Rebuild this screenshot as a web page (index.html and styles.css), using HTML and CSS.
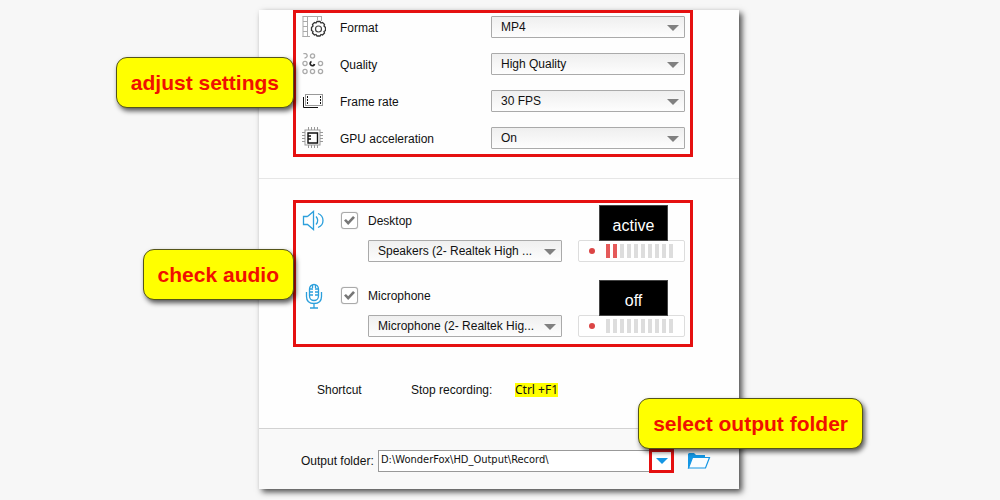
FILE: index.html
```html
<!DOCTYPE html>
<html lang="en">
<head>
    <meta charset="UTF-8">
    <meta name="viewport" content="width=device-width, initial-scale=1.0">
    <title>Recorder settings</title>
    <link rel="stylesheet" href="styles.css">
</head>
<body>
    <main class="panel">
        <section class="settings">
            <div class="marked settings-grid">
                <svg class="icon" width="24" height="22" viewBox="0 0 24 22" fill="none">
                    <path d="M1 0.500V21M5.500 0.500V21M0.500 0.500H20M19.500 0V5M15.500 0V4M1 5.500H5M1 10.500H5M1 15.500H5M0.500 20.500H8" stroke="#aaa"/>
                    <path d="M14 7l1-1.500h3L19 7l1.500-.500 2 2-.500 1.500 1.500 1.500v3L22 15.500l.500 1.500-2 2-1.500-.500-1 1.500h-3l-1-1.500-1.500.500-2-2 .500-1.500-1.500-1v-3l1.500-1.500-.500-1.500 2-2z" stroke="#333" stroke-width="1.300"/>
                    <circle cx="16.500" cy="13" r="3" stroke="#444" stroke-width="1.200"/>
                </svg>
                <label for="format">Format</label>
                <div class="select">
                    <select id="format"><option>MP4</option><option>AVI</option></select>
                </div>

                <svg class="icon" width="24" height="22" viewBox="0 0 24 22" fill="none" stroke="#aaa" stroke-width="1.300">
                    <path d="M1.500 1a2.200 2.200 0 1 1 1 3.800"/>
                    <circle cx="10.500" cy="3" r="2.100"/>
                    <circle cx="3" cy="10.500" r="2.100"/>
                    <circle cx="18.500" cy="10.500" r="2.100"/>
                    <circle cx="3" cy="18.500" r="2.100"/>
                    <circle cx="10.500" cy="18.500" r="2.100"/>
                    <circle cx="18.500" cy="18.500" r="2.100"/>
                    <path d="M9.500 8.500a2.200 2.200 0 1 0 3 2.500" stroke="#222" stroke-width="1.700"/>
                </svg>
                <label for="quality">Quality</label>
                <div class="select">
                    <select id="quality"><option>High Quality</option><option>Standard</option></select>
                </div>

                <svg class="icon" width="24" height="22" viewBox="0 0 24 22" fill="none">
                    <rect x="3.500" y="4.500" width="17" height="11" stroke="#999"/>
                    <path d="M5.500 6v9M18.500 6v9" stroke="#111" stroke-dasharray="2 1"/>
                    <path d="M1.500 7v10.500H16" stroke="#111"/>
                </svg>
                <label for="rate">Frame rate</label>
                <div class="select">
                    <select id="rate"><option>30 FPS</option><option>60 FPS</option></select>
                </div>

                <svg class="icon" width="24" height="22" viewBox="0 0 24 22" fill="none">
                    <path d="M6.500 0v3M9.500 0v3M12.500 0v3M15.500 0v3M6.500 18v3M9.500 18v3M12.500 18v3M15.500 18v3M0 5.500h3M0 8.500h3M0 11.500h3M0 14.500h3M18 5.500h3M18 8.500h3M18 11.500h3M18 14.500h3" stroke="#999"/>
                    <rect x="3" y="3" width="15" height="15" stroke="#999"/>
                    <path d="M6 6h9.500v10H6zM6 9h3M6 12h3" stroke="#111" stroke-width="1.400"/>
                </svg>
                <label for="gpu">GPU acceleration</label>
                <div class="select">
                    <select id="gpu"><option>On</option><option>Off</option></select>
                </div>
                <div class="callout callout-settings">adjust settings</div>
            </div>
        </section>

        <section class="audio">
            <div class="marked audio-list">
                <div class="source">
                    <svg class="icon" width="24" height="22" viewBox="0 0 24 22" fill="none" stroke="#2b9fdc" stroke-width="1.300">
                        <path d="M5.500 6.500H1.500v8h4l6 5V1.500l-6 5"/>
                        <path d="M14 6.500q3.500 4 0 8M16 3.500q5 2 5 7t-5 7"/>
                    </svg>
                    <input class="check" type="checkbox" id="desktop" checked>
                    <label for="desktop">Desktop</label>
                    <div class="status">active</div>
                    <div class="select device">
                        <select aria-label="Desktop device"><option>Speakers (2- Realtek High ...</option></select>
                    </div>
                    <div class="level">
                        <span class="dot"></span>
                        <div class="bars"><i class="on"></i><i class="on"></i><i></i><i></i><i></i><i></i><i></i><i></i><i></i><i></i></div>
                    </div>
                </div>
                <div class="source">
                    <svg class="icon" width="24" height="26" viewBox="0 0 24 26" fill="none" stroke="#2b9fdc" stroke-width="1.300">
                        <rect x="7.500" y="1.500" width="9" height="16" rx="4.500"/>
                        <path d="M4.500 9v4.500q0 7 7.500 7t7.500-7V9M12 20.500V25M8 25h8"/>
                        <path d="M8 6h3M8 9h3M8 12h3M13 6h3M13 9h3M13 12h3M10.500 2v3M13.500 2v3"/>
                    </svg>
                    <input class="check" type="checkbox" id="microphone" checked>
                    <label for="microphone">Microphone</label>
                    <div class="status">off</div>
                    <div class="select device">
                        <select aria-label="Microphone device"><option>Microphone (2- Realtek Hig...</option></select>
                    </div>
                    <div class="level">
                        <span class="dot"></span>
                        <div class="bars"><i></i><i></i><i></i><i></i><i></i><i></i><i></i><i></i><i></i><i></i></div>
                    </div>
                </div>
                <div class="callout callout-audio">check audio</div>
            </div>
            <div class="shortcut">
                <span>Shortcut</span>
                <span>Stop recording:</span>
                <kbd>Ctrl +F1</kbd>
            </div>
        </section>

        <footer class="output">
            <label for="folder">Output folder:</label>
            <input type="text" id="folder" value="D:\WonderFox\HD_Output\Record\">
            <button class="drop" aria-label="Recent folders"></button>
            <button class="open" aria-label="Open folder">
                <svg width="24" height="18" viewBox="0 0 24 18">
                    <path d="M1 16.500V2l1-1h5l2 2h9v3H6L2 16.500z" fill="#1496e4"/>
                    <path d="M5.500 5.500h17l-4 10.500h-17z" fill="#fafdff" stroke="#1496e4" stroke-width="1.200"/>
                </svg>
            </button>
            <div class="callout callout-output">select output folder</div>
        </footer>
    </main>
</body>
</html>
```
FILE: styles.css
```css
* {
    box-sizing: border-box;
}
body {
    margin: 0;
    padding: 10px 12px 10px 10px;
    background: #f7f7f7;
    color: #111;
    font-family: "Liberation Sans", Arial, sans-serif;
    font-size: 12px;
    line-height: 16px;
}
.panel {
    max-width: 480px;
    margin: 0 auto;
    background: #fefefe;
    box-shadow: 3px 3px 6px rgba(0, 0, 0, 0.7);
}
.settings {
    padding: 0 46px 21px 34px;
    border-bottom: 1px solid #e6e6e6;
}
.audio {
    padding: 21px 46px 0 34px;
}
.marked {
    position: relative;
    border: 3px solid #e51010;
}
.settings-grid {
    display: grid;
    grid-template-columns: 38px 1fr 194px;
    row-gap: 15px;
    align-items: center;
    padding: 3px 5px 5px 6px;
}
.settings-grid label {
    padding-top: 2px;
}
.icon {
    display: block;
}

/* drop-downs */
.select {
    position: relative;
}
.select select {
    display: block;
    width: 100%;
    height: 22px;
    padding: 0 24px 0 9px;
    border: 1px solid #aaa;
    border-radius: 1px;
    background: linear-gradient(#efefef, #fdfdfd);
    color: #111;
    font: inherit;
    appearance: none;
}
.select::after {
    content: "";
    position: absolute;
    top: 9px;
    right: 6px;
    border: 6px solid transparent;
    border-top-color: #808080;
    border-bottom: 0;
    pointer-events: none;
}

/* audio sources */
.audio-list {
    display: grid;
    gap: 16px;
    padding: 0 5px 7px 6px;
}
.source {
    display: grid;
    grid-template-columns: 39px 27px 1fr 107px;
    grid-template-rows: 35px 24px;
    align-items: center;
}
.check {
    width: 17px;
    height: 17px;
    margin: 0;
    border: 1px solid #aaa;
    border-radius: 3px;
    background: #fff;
    box-shadow: 0 0 1px #aaa;
    appearance: none;
}
.check:checked::before {
    content: "";
    display: block;
    width: 11px;
    height: 9px;
    margin: 3px 0 0 2px;
    background: #777;
    clip-path: polygon(0 50%, 18% 32%, 38% 58%, 82% 0, 100% 20%, 38% 100%);
}
.device {
    grid-column: 3;
    align-self: end;
    margin-right: 16px;
}
.status {
    z-index: 1;
    align-self: end;
    height: 36px;
    margin: 0 17px -3px 21px;
    border: 1px solid #444;
    background: #000;
    color: #fff;
    font-size: 16px;
    line-height: 40px;
    text-align: center;
}
.level {
    display: flex;
    align-items: center;
    align-self: end;
    gap: 11px;
    height: 22px;
    padding-left: 10px;
    border: 1px solid #ddd;
    border-radius: 2px;
    background: #fff;
}
.dot {
    width: 6px;
    height: 6px;
    border-radius: 50%;
    background: #db4545;
}
.bars {
    display: flex;
    gap: 3px;
}
.bars i {
    width: 4px;
    height: 14px;
    background: #ddd;
}
.bars .on {
    background: #e55a5a;
}

.shortcut {
    display: flex;
    align-items: center;
    padding: 35px 0 30px 24px;
}
.shortcut span:first-child {
    width: 94px;
}
.shortcut span:nth-child(2) {
    width: 104px;
}
kbd {
    background: #ff0;
    font-family: "Noto Sans", sans-serif;
    font-size: 12px;
    line-height: 14px;
}

/* output folder */
.output {
    position: relative;
    display: flex;
    align-items: center;
    padding: 20px 28px 16px 42px;
    border-top: 1px solid #d2d2d2;
    background: #f9f9f9;
}
.output label {
    width: 77px;
}
.output input {
    flex: 1;
    min-width: 0;
    height: 22px;
    padding: 0 2px 3px;
    border: 1px solid #999;
    border-right: 0;
    background: #fff;
    color: #111;
    font-family: "DejaVu Sans Condensed", "Noto Sans", sans-serif;
    font-size: 11px;
}
.drop {
    display: grid;
    place-items: center;
    width: 25px;
    height: 24px;
    padding: 0;
    border: 3px solid #e51010;
    background: #fff;
}
.drop::before {
    content: "";
    border: 6px solid transparent;
    border-top-color: #1496e4;
    border-bottom: 0;
}
.open {
    margin-left: 13px;
    padding: 0;
    border: 0;
    background: none;
}
.open svg {
    display: block;
}

/* yellow hints */
.callout {
    position: absolute;
    z-index: 2;
    padding: 0 14px;
    border: 1px solid #55551a;
    border-radius: 11px;
    background: #ff0;
    box-shadow: 2px 3px 5px rgba(0, 0, 0, 0.65);
    color: #f01000;
    font-size: 21px;
    font-weight: bold;
    line-height: 49px;
    white-space: nowrap;
}
.callout-settings {
    top: 44px;
    right: calc(100% + 2px);
}
.callout-audio {
    top: 46px;
    right: calc(100% + 2px);
}
.callout-output {
    top: -31px;
    right: -124px;
}
```
